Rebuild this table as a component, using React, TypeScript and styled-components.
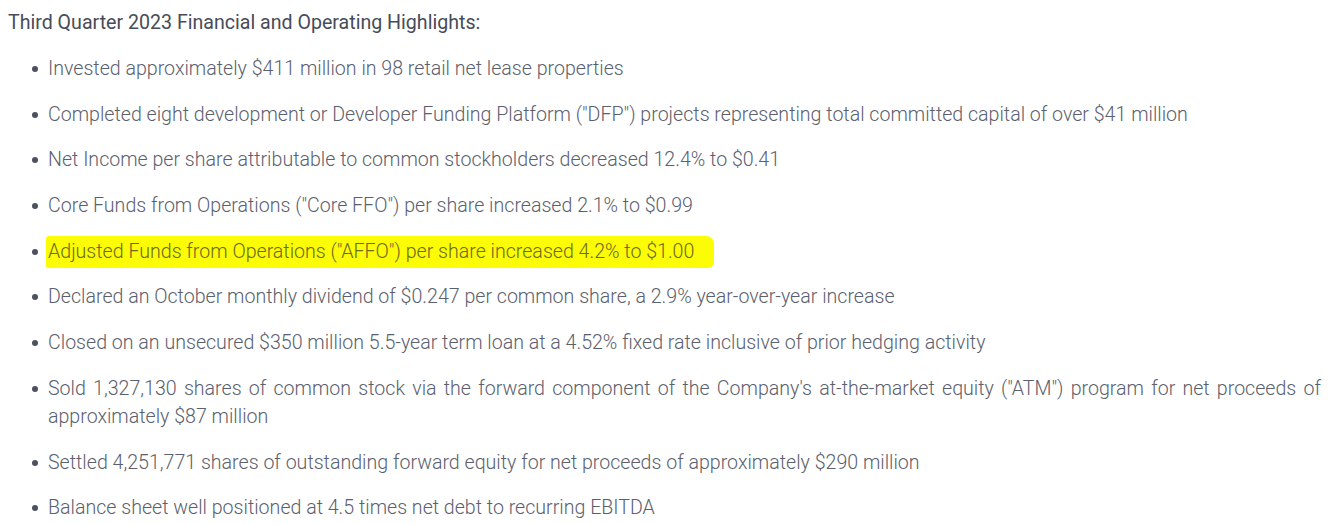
import React from "react";
import styled, { createGlobalStyle } from "styled-components";

const Global = createGlobalStyle`
  html, body { margin: 0; padding: 0; background: #ffffff; }
  body { font-family: Roboto, "Noto Sans", Arial, sans-serif; }
`;

const Page = styled.div`
  padding: 9px 17px 0 8px;
`;

const Heading = styled.h3`
  margin: 0;
  font-size: 19.6px;
  font-weight: 400;
  line-height: 28px;
  color: #474c58;
`;

const List = styled.ul`
  list-style: none;
  margin: 18px 0 0;
  padding: 0 0 0 24px;
  display: flex;
  flex-direction: column;
  gap: 17.7px;
`;

const Item = styled.li`
  display: flex;
  align-items: flex-start;
  gap: 10px;
  font-size: 19.6px;
  font-weight: 300;
  line-height: 28px;
  color: #5b606d;
  text-align: justify;
`;

const Bullet = styled.span`
  flex: none;
  width: 6px;
  height: 6px;
  border-radius: 50%;
  background: #4c5160;
  margin-top: 11px;
`;

const Text = styled.span`
  flex: 1;
`;

const Marker = styled.span`
  background: #fcfc06;
  color: #6b6a1e;
  padding: 4px 20px 5px 2px;
  margin-left: -2px;
  border-radius: 3px 8px 6px 2px;
  box-decoration-break: clone;
`;

const items: React.ReactNode[] = [
  "Invested approximately $411 million in 98 retail net lease properties",
  'Completed eight development or Developer Funding Platform ("DFP") projects representing total committed capital of over $41 million',
  "Net Income per share attributable to common stockholders decreased 12.4% to $0.41",
  'Core Funds from Operations ("Core FFO") per share increased 2.1% to $0.99',
  <Marker key="m">Adjusted Funds from Operations ("AFFO") per share increased 4.2% to $1.00</Marker>,
  "Declared an October monthly dividend of $0.247 per common share, a 2.9% year-over-year increase",
  "Closed on an unsecured $350 million 5.5-year term loan at a 4.52% fixed rate inclusive of prior hedging activity",
  'Sold 1,327,130 shares of common stock via the forward component of the Company\'s at-the-market equity ("ATM") program for net proceeds of approximately $87 million',
  "Settled 4,251,771 shares of outstanding forward equity for net proceeds of approximately $290 million",
  "Balance sheet well positioned at 4.5 times net debt to recurring EBITDA",
];

export default function App() {
  return (
    <Page>
      <Global />
      <Heading>Third Quarter 2023 Financial and Operating Highlights:</Heading>
      <List>
        {items.map((it, i) => (
          <Item key={i}>
            <Bullet />
            <Text>{it}</Text>
          </Item>
        ))}
      </List>
    </Page>
  );
}
